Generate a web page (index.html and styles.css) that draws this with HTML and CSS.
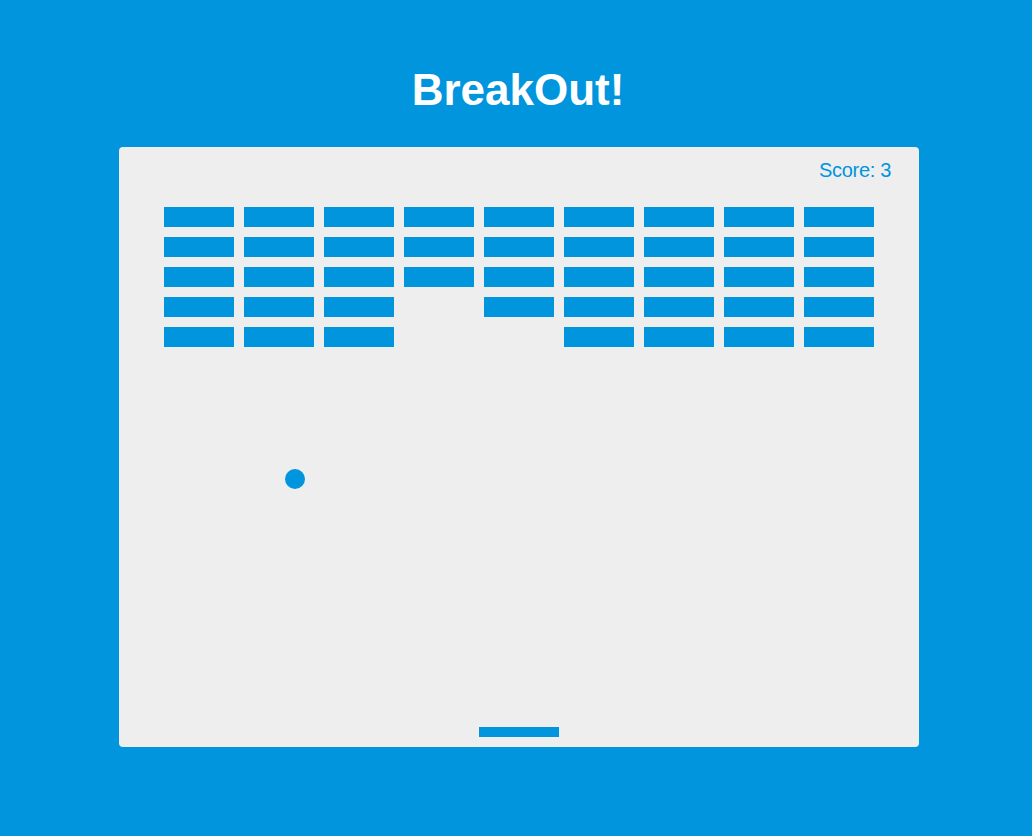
FILE: index.html
```html
<!DOCTYPE html>
<html>
<head>
<meta charset="utf-8">
<title>BreakOut!</title>
<link rel="stylesheet" href="styles.css">
</head>
<body>
<main class="page">
  <h1 class="title">BreakOut!</h1>
  <div class="game">
    <div class="score">Score: 3</div>
    <div class="bricks">
      <div class="brick"></div><div class="brick"></div><div class="brick"></div><div class="brick"></div><div class="brick"></div><div class="brick"></div><div class="brick"></div><div class="brick"></div><div class="brick"></div>
      <div class="brick"></div><div class="brick"></div><div class="brick"></div><div class="brick"></div><div class="brick"></div><div class="brick"></div><div class="brick"></div><div class="brick"></div><div class="brick"></div>
      <div class="brick"></div><div class="brick"></div><div class="brick"></div><div class="brick"></div><div class="brick"></div><div class="brick"></div><div class="brick"></div><div class="brick"></div><div class="brick"></div>
      <div class="brick"></div><div class="brick"></div><div class="brick"></div><div class="brick gone"></div><div class="brick"></div><div class="brick"></div><div class="brick"></div><div class="brick"></div><div class="brick"></div>
      <div class="brick"></div><div class="brick"></div><div class="brick"></div><div class="brick gone"></div><div class="brick gone"></div><div class="brick"></div><div class="brick"></div><div class="brick"></div><div class="brick"></div>
    </div>
    <div class="ball"></div>
    <div class="paddle"></div>
  </div>
</main>
</body>
</html>
```
FILE: styles.css
```css
html, body {
  margin: 0;
  padding: 0;
  background: #0095dd;
}

.page {
  padding-top: 68px;
  font-family: "Liberation Sans", Arial, sans-serif;
}

.title {
  margin: 0 0 35px;
  font-size: 44px;
  line-height: 44px;
  font-weight: bold;
  color: #ffffff;
  text-align: center;
  padding-left: 4px;
}

.game {
  position: relative;
  width: 800px;
  height: 600px;
  margin-left: 119px;
  background: #eeeeee;
  border-radius: 4px;
}

.score {
  position: absolute;
  left: 700px;
  top: 13px;
  font-size: 20px;
  line-height: 20px;
  color: #0095dd;
  letter-spacing: -0.3px;
}

.bricks {
  display: grid;
  grid-template-columns: repeat(9, 70px);
  grid-auto-rows: 20px;
  gap: 10px;
  padding: 60px 0 0 45px;
}

.brick {
  background: #0095dd;
}

.brick.gone {
  visibility: hidden;
}

.ball {
  position: absolute;
  left: 166px;
  top: 322px;
  width: 20px;
  height: 20px;
  border-radius: 50%;
  background: #0095dd;
}

.paddle {
  position: absolute;
  left: 360px;
  top: 580px;
  width: 80px;
  height: 10px;
  background: #0095dd;
}
```
